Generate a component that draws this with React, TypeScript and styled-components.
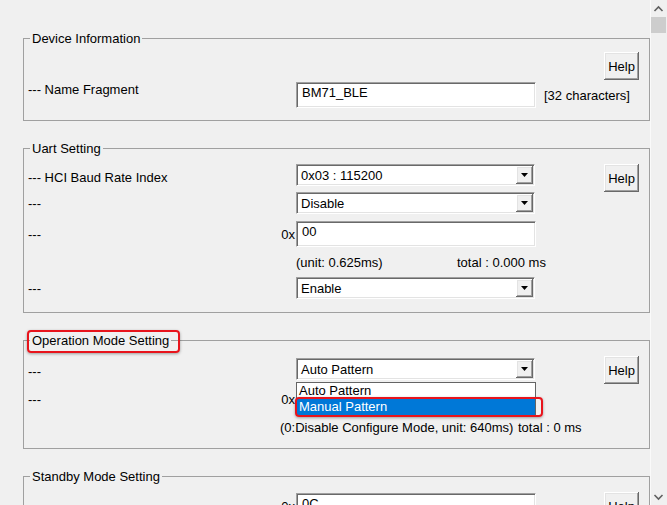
import React from "react";
import styled, { createGlobalStyle } from "styled-components";

const Global = createGlobalStyle`
  html, body { margin: 0; padding: 0; background: #f0f0f0; }
  body {
    font-family: "Liberation Sans", Arial, sans-serif;
    font-size: 13px;
    color: #000;
  }
`;

const Window = styled.div`
  display: flex;
  width: 667px;
  height: 505px;
  overflow: hidden;
  background: #f0f0f0;
`;

const Content = styled.div`
  flex: 1;
  min-width: 0;
  padding: 31px 0 0 23px;
  overflow: hidden;
`;

const Group = styled.fieldset<{ $pb: number }>`
  box-sizing: border-box;
  width: 627px;
  min-width: 0;
  margin: 0 0 20px;
  padding: 0 10px ${(p) => p.$pb}px 4px;
  border: 1px solid #a0a0a0;
`;

const Legend = styled.legend`
  position: relative;
  margin-left: 2px;
  padding: 0 2px;
  line-height: 15px;
`;

const Highlight = styled.span`
  position: absolute;
  box-sizing: border-box;
  border: 2px solid #e8141c;
  border-radius: 4px;
  box-shadow: 0 1px 3px rgba(0, 0, 0, 0.35);
  pointer-events: none;
`;

const LegendMark = styled(Highlight)`
  left: -3px;
  right: -9px;
  top: -3px;
  bottom: -5px;
`;

const Row = styled.div<{ $mt: number }>`
  display: grid;
  grid-template-columns: 252px 16px 240px 1fr 35px;
  align-items: center;
  margin-top: ${(p) => p.$mt}px;
`;

const Label = styled.div<{ $top?: boolean; $nudge?: number }>`
  grid-column: 1;
  white-space: nowrap;
  line-height: 15px;
  align-self: ${(p) => (p.$top ? "start" : "center")};
  padding-top: ${(p) => (p.$nudge ?? 0) * 2}px;
`;

const Prefix = styled.div`
  grid-column: 2;
  text-align: right;
  padding-right: 1px;
  line-height: 15px;
`;

const Extra = styled.div`
  grid-column: 4 / 6;
  padding-left: 8px;
  white-space: nowrap;
  line-height: 15px;
`;

const Note = styled.div<{ $from: number; $split: number }>`
  grid-column: ${(p) => p.$from} / 6;
  display: grid;
  grid-template-columns: ${(p) => p.$split}px auto;
  justify-content: start;
  white-space: nowrap;
  line-height: 15px;
`;

const sunken = `
  background: #fff;
  border: 1px solid;
  border-color: #a0a0a0 #ffffff #ffffff #a0a0a0;
  box-shadow: inset 1px 1px #696969, inset -1px -1px #e3e3e3;
`;

const Field = styled.div`
  grid-column: 3;
  box-sizing: border-box;
  width: 240px;
  height: 26px;
  padding: 2px 5px;
  line-height: 15px;
  white-space: nowrap;
  ${sunken}
`;

const Combo = styled.div`
  grid-column: 3;
  position: relative;
  box-sizing: border-box;
  width: 239px;
  height: 22px;
  padding: 1px;
  display: flex;
  align-items: stretch;
  ${sunken}
`;

const ComboText = styled.div`
  flex: 1;
  padding-left: 3px;
  line-height: 19px;
  white-space: nowrap;
`;

const ArrowButton = styled.div`
  flex: none;
  width: 17px;
  display: flex;
  align-items: center;
  justify-content: center;
  background: #f0f0f0;
  box-shadow: inset -1px -1px #696969, inset 1px 1px #ffffff,
    inset -2px -2px #a0a0a0, inset 2px 2px #e3e3e3;
`;

const DropList = styled.div`
  position: absolute;
  left: -1px;
  top: 23px;
  width: 240px;
  box-sizing: border-box;
  border: 1px solid #646464;
  background: #fff;
  z-index: 2;
`;

const ListItem = styled.div<{ $selected?: boolean }>`
  height: 16px;
  line-height: 16px;
  padding-left: 2px;
  white-space: nowrap;
  background: ${(p) => (p.$selected ? "#0078d7" : "#fff")};
  color: ${(p) => (p.$selected ? "#fff" : "#000")};
`;

const ItemMark = styled(Highlight)`
  left: -2px;
  top: 14px;
  width: 248px;
  height: 20px;
`;

const HelpButton = styled.div<{ $mt?: number; $mb?: number }>`
  grid-column: 5;
  align-self: start;
  box-sizing: border-box;
  width: 35px;
  height: 28px;
  margin: ${(p) => p.$mt ?? 0}px 0 ${(p) => p.$mb ?? 0}px;
  display: flex;
  align-items: center;
  justify-content: center;
  background: #f0f0f0;
  box-shadow: inset -1px -1px #696969, inset 1px 1px #ffffff,
    inset -2px -2px #a0a0a0, inset 2px 2px #e3e3e3;
`;

const ScrollBar = styled.div`
  flex: none;
  width: 17px;
  height: 505px;
  display: flex;
  flex-direction: column;
  background: #f0f0f0;
  box-shadow: inset 1px 0 #fafafa;
`;

const ScrollArrow = styled.div`
  flex: none;
  height: 17px;
  display: flex;
  align-items: center;
  justify-content: center;
`;

const Track = styled.div`
  flex: 1;
  padding: 0 1px;
`;

const Thumb = styled.div`
  height: 16px;
  background: #cdcdcd;
`;

const DownTriangle = () => (
  <svg width="7" height="4" viewBox="0 0 7 4">
    <polygon points="0,0 7,0 3.5,4" fill="#000" />
  </svg>
);

const Chevron = ({ up }: { up?: boolean }) => (
  <svg width="17" height="17" viewBox="0 0 17 17">
    <path
      d={up ? "M4.5 11 L8.5 7 L12.5 11" : "M4.5 7 L8.5 11 L12.5 7"}
      fill="none"
      stroke="#606060"
      strokeWidth="1.6"
    />
  </svg>
);

const Select = ({ value, children }: { value: string; children?: React.ReactNode }) => (
  <Combo>
    <ComboText>{value}</ComboText>
    <ArrowButton>
      <DownTriangle />
    </ArrowButton>
    {children}
  </Combo>
);

export default function App() {
  return (
    <>
      <Global />
      <Window>
        <Content>
          <Group $pb={12}>
            <Legend>Device Information</Legend>
            <Row $mt={6}>
              <HelpButton>Help</HelpButton>
            </Row>
            <Row $mt={2}>
              <Label $top>--- Name Fragment</Label>
              <Field>BM71_BLE</Field>
              <Extra>[32 characters]</Extra>
            </Row>
          </Group>

          <Group $pb={13}>
            <Legend>Uart Setting</Legend>
            <Row $mt={8}>
              <Label $nudge={2}>--- HCI Baud Rate Index</Label>
              <Select value="0x03 : 115200" />
              <HelpButton $mb={-6}>Help</HelpButton>
            </Row>
            <Row $mt={6}>
              <Label>---</Label>
              <Select value="Disable" />
            </Row>
            <Row $mt={7}>
              <Label>---</Label>
              <Prefix>0x</Prefix>
              <Field>00</Field>
            </Row>
            <Row $mt={8}>
              <Note $from={3} $split={161}>
                <span>(unit: 0.625ms)</span>
                <span>total : 0.000 ms</span>
              </Note>
            </Row>
            <Row $mt={7}>
              <Label>---</Label>
              <Select value="Enable" />
            </Row>
          </Group>

          <Group $pb={13}>
            <Legend>
              Operation Mode Setting
              <LegendMark />
            </Legend>
            <Row $mt={10}>
              <Label $nudge={2}>---</Label>
              <Select value="Auto Pattern">
                <DropList>
                  <ListItem>Auto Pattern</ListItem>
                  <ListItem $selected>Manual Pattern</ListItem>
                  <ItemMark />
                </DropList>
              </Select>
              <HelpButton $mt={-2} $mb={-4}>
                Help
              </HelpButton>
            </Row>
            <Row $mt={6}>
              <Label>---</Label>
              <Prefix>0x</Prefix>
              <Field />
            </Row>
            <Row $mt={8}>
              <Note $from={2} $split={238}>
                <span>(0:Disable Configure Mode, unit: 640ms)</span>
                <span>total : 0 ms</span>
              </Note>
            </Row>
          </Group>

          <Group $pb={13}>
            <Legend>Standby Mode Setting</Legend>
            <Row $mt={8}>
              <Label>---</Label>
              <Prefix>0x</Prefix>
              <Field>0C</Field>
              <HelpButton>Help</HelpButton>
            </Row>
          </Group>
        </Content>
        <ScrollBar>
          <ScrollArrow>
            <Chevron up />
          </ScrollArrow>
          <Track>
            <Thumb />
          </Track>
          <ScrollArrow>
            <Chevron />
          </ScrollArrow>
        </ScrollBar>
      </Window>
    </>
  );
}
